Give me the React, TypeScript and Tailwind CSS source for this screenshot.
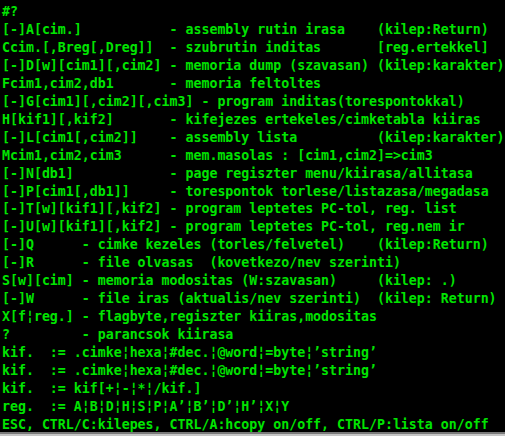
const lines = [
  "#?",
  "[-]A[cim.]           - assembly rutin irasa    (kilep:Return)",
  "Ccim.[,Breg[,Dreg]]  - szubrutin inditas       [reg.ertekkel]",
  "[-]D[w][cim1][,cim2] - memoria dump (szavasan) (kilep:karakter)",
  "Fcim1,cim2,db1       - memoria feltoltes",
  "[-]G[cim1][,cim2][,cim3] - program inditas(torespontokkal)",
  "H[kif1][,kif2]       - kifejezes ertekeles/cimketabla kiiras",
  "[-]L[cim1[,cim2]]    - assembly lista          (kilep:karakter)",
  "Mcim1,cim2,cim3      - mem.masolas : [cim1,cim2]=>cim3",
  "[-]N[db1]            - page regiszter menu/kiirasa/allitasa",
  "[-]P[cim1[,db1]]     - torespontok torlese/listazasa/megadasa",
  "[-]T[w][kif1][,kif2] - program leptetes PC-tol, reg. list",
  "[-]U[w][kif1][,kif2] - program leptetes PC-tol, reg.nem ir",
  "[-]Q      - cimke kezeles (torles/felvetel)    (kilep:Return)",
  "[-]R      - file olvasas  (kovetkezo/nev szerinti)",
  "S[w][cim] - memoria modositas (W:szavasan)     (kilep: .)",
  "[-]W      - file iras (aktualis/nev szerinti)  (kilep: Return)",
  "X[f¦reg.] - flagbyte,regiszter kiiras,modositas",
  "?         - parancsok kiirasa",
  "kif.  := .cimke¦hexa¦#dec.¦@word¦=byte¦’string’",
  "kif.  := .cimke¦hexa¦#dec.¦@word¦=byte¦’string’",
  "kif.  := kif[+¦-¦*¦/kif.]",
  "reg.  := A¦B¦D¦H¦S¦P¦A’¦B’¦D’¦H’¦X¦Y",
  "ESC, CTRL/C:kilepes, CTRL/A:hcopy on/off, CTRL/P:lista on/off",
];

export default function App() {
  return (
    <div className="flex h-[436px] w-[505px] flex-col overflow-hidden bg-black">
      {/* terminal output */}
      <pre className="flex-1 overflow-hidden pl-[2px] pt-[3px] font-['DejaVu_Sans_Mono',monospace] text-[13.25px] font-bold leading-[17.95px] text-[#00e400]">
        {lines.join("\n")}
      </pre>
      {/* window frame edge */}
      <div className="h-[2px] bg-[#7a7a7a]" />
      <div className="h-[2px] bg-[#c4c4c4]" />
    </div>
  );
}
